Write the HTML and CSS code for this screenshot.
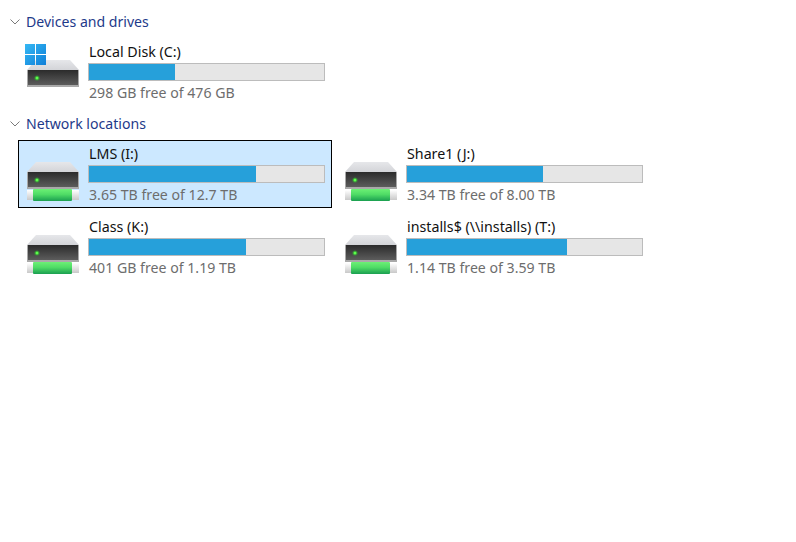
FILE: index.html
```html
<!DOCTYPE html>
<html lang="en">
<head>
<meta charset="utf-8">
<title>This PC</title>
<link rel="stylesheet" href="styles.css">
</head>
<body>
<svg class="defs" width="0" height="0" aria-hidden="true">
  <defs>
    <linearGradient id="top" x1="0" y1="0" x2="0" y2="1"><stop offset="0" stop-color="#e6e7ea"/><stop offset="1" stop-color="#d3d4d8"/></linearGradient>
    <linearGradient id="front" x1="0" y1="0" x2="0" y2="1"><stop offset="0" stop-color="#2b2b2b"/><stop offset="1" stop-color="#5c5c5c"/></linearGradient>
    <linearGradient id="green" x1="0" y1="0" x2="0" y2="1"><stop offset="0" stop-color="#6cf075"/><stop offset="0.45" stop-color="#4fdc66"/><stop offset="1" stop-color="#1a9f50"/></linearGradient>
    <linearGradient id="end" x1="0" y1="0" x2="0" y2="1"><stop offset="0" stop-color="#ffffff"/><stop offset="1" stop-color="#c9c9c9"/></linearGradient>
    <linearGradient id="win" x1="0" y1="0" x2="1" y2="1"><stop offset="0" stop-color="#35b8f4"/><stop offset="1" stop-color="#0f7fd8"/></linearGradient>
    <symbol id="drive" viewBox="0 0 60 60">
      <path d="M13 18H47L56 28H4Z" fill="url(#top)"/>
      <rect x="4" y="28" width="52" height="17" fill="#a9a9a9"/>
      <rect x="5" y="28" width="50" height="15" fill="url(#front)"/>
      <circle cx="14" cy="36" r="2.6" fill="#2bd52b" opacity="0.45"/>
      <circle cx="14" cy="36" r="1.5" fill="#5cff4a"/>
    </symbol>
    <symbol id="net" viewBox="0 0 60 60">
      <use href="#drive" width="60" height="60"/>
      <rect x="4" y="46" width="52" height="10" fill="url(#end)"/>
      <rect x="10" y="45" width="39" height="12" rx="1" fill="url(#green)"/>
    </symbol>
  </defs>
</svg>

<section class="group">
  <h2 class="group-head">
    <svg class="chev" width="10" height="6" viewBox="0 0 10 6"><path d="M0.5 0.5L5 5L9.5 0.5" fill="none" stroke="#7a7a7a"/></svg>
    <span>Devices and drives</span>
  </h2>
  <div class="tiles">
    <div class="tile">
      <svg class="icon" width="60" height="60" viewBox="0 0 60 60">
        <use href="#drive" width="60" height="60"/>
        <path d="M2 2H12V12H2ZM13 2H23V12H13ZM2 13H12V23H2ZM13 13H23V23H13Z" fill="url(#win)"/>
      </svg>
      <div class="info">
        <div class="name">Local Disk (C:)</div>
        <div class="bar"><div class="fill" style="width:36.6%"></div></div>
        <div class="status">298 GB free of 476 GB</div>
      </div>
    </div>
  </div>
</section>

<section class="group">
  <h2 class="group-head">
    <svg class="chev" width="10" height="6" viewBox="0 0 10 6"><path d="M0.5 0.5L5 5L9.5 0.5" fill="none" stroke="#7a7a7a"/></svg>
    <span>Network locations</span>
  </h2>
  <div class="tiles">
    <div class="tile selected">
      <svg class="icon" width="60" height="60"><use href="#net" width="60" height="60"/></svg>
      <div class="info">
        <div class="name">LMS (I:)</div>
        <div class="bar"><div class="fill" style="width:71.1%"></div></div>
        <div class="status">3.65 TB free of 12.7 TB</div>
      </div>
    </div>
    <div class="tile">
      <svg class="icon" width="60" height="60"><use href="#net" width="60" height="60"/></svg>
      <div class="info">
        <div class="name">Share1 (J:)</div>
        <div class="bar"><div class="fill" style="width:57.9%"></div></div>
        <div class="status">3.34 TB free of 8.00 TB</div>
      </div>
    </div>
    <div class="tile">
      <svg class="icon" width="60" height="60"><use href="#net" width="60" height="60"/></svg>
      <div class="info">
        <div class="name">Class (K:)</div>
        <div class="bar"><div class="fill" style="width:66.8%"></div></div>
        <div class="status">401 GB free of 1.19 TB</div>
      </div>
    </div>
    <div class="tile">
      <svg class="icon" width="60" height="60"><use href="#net" width="60" height="60"/></svg>
      <div class="info">
        <div class="name">installs$ (\\installs) (T:)</div>
        <div class="bar"><div class="fill" style="width:68.1%"></div></div>
        <div class="status">1.14 TB free of 3.59 TB</div>
      </div>
    </div>
  </div>
</section>
```

FILE: styles.css
```css
* { box-sizing: border-box; }

html, body {
  margin: 0;
  padding: 0;
  background: #fff;
}

body {
  height: 542px;
  overflow: hidden;
  padding-top: 10px;
  font-family: "Noto Sans", "Open Sans", "Liberation Sans", sans-serif;
  font-size: 14.25px;
}

.defs {
  display: block;
  position: absolute;
}

.group {
  margin-bottom: 6px;
}

.group-head {
  display: flex;
  align-items: center;
  gap: 6px;
  height: 24px;
  margin: 0 0 4px;
  padding: 0 0 2px 10px;
  font-size: 14.1px;
  font-weight: 400;
  color: #1e3a8a;
}

.chev {
  display: block;
  margin-top: 2px;
}

.tiles {
  display: grid;
  grid-template-columns: 314px 314px;
  column-gap: 4px;
  row-gap: 5px;
  padding-left: 18px;
}

.tile {
  display: flex;
  align-items: center;
  gap: 5px;
  height: 68px;
  padding: 0 4px;
  border: 1px solid transparent;
}

.tile.selected {
  background: #cce8ff;
  border-color: #000;
}

.icon {
  display: block;
  flex: none;
}

.info {
  width: 237px;
}

.name {
  height: 20px;
  line-height: 20px;
  margin-bottom: 1px;
  padding-left: 1px;
  color: #111;
  white-space: nowrap;
}

.bar {
  height: 18px;
  background: #e6e6e6;
  border: 1px solid #bcbcbc;
}

.fill {
  height: 100%;
  background: #26a0da;
}

.status {
  height: 20px;
  line-height: 20px;
  margin-top: 2px;
  padding-left: 1px;
  font-size: 14.15px;
  color: #6d6d6d;
  white-space: nowrap;
}
```
